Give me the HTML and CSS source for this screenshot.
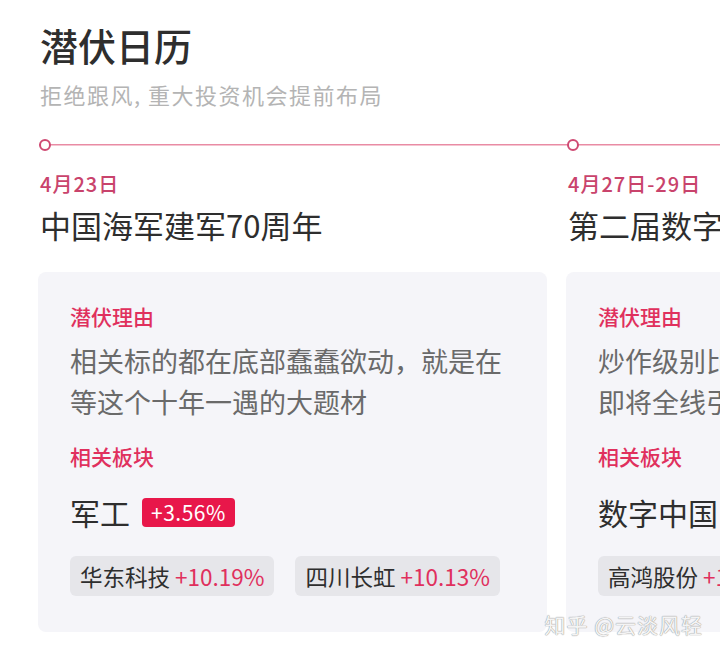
FILE: index.html
```html
<!DOCTYPE html>
<html lang="zh">
<head>
    <meta charset="UTF-8">
    <meta name="viewport" content="width=device-width, initial-scale=1.0">
    <title>潜伏日历</title>
    <link rel="stylesheet" href="styles.css">
</head>
<body>
    <header class="page-head">
        <h1 class="title">潜伏日历</h1>
        <p class="subtitle">拒绝跟风, 重大投资机会提前布局</p>
    </header>
    <main class="timeline">
        <section class="event">
            <div class="mark"><span class="dot"></span></div>
            <div class="date">4月23日</div>
            <h2 class="event-name">中国海军建军70周年</h2>
            <div class="card">
                <h3 class="label">潜伏理由</h3>
                <p class="reason">相关标的都在底部蠢蠢欲动，就是在等这个十年一遇的大题材</p>
                <h3 class="label label-sector">相关板块</h3>
                <div class="sector">
                    <span class="sector-name">军工</span>
                    <span class="badge">+3.56%</span>
                </div>
                <div class="stocks">
                    <span class="chip">华东科技 <em>+10.19%</em></span>
                    <span class="chip">四川长虹 <em>+10.13%</em></span>
                </div>
            </div>
        </section>
        <section class="event">
            <div class="mark"><span class="dot"></span></div>
            <div class="date">4月27日-29日</div>
            <h2 class="event-name">第二届数字中国建设峰会</h2>
            <div class="card">
                <h3 class="label">潜伏理由</h3>
                <p class="reason">炒作级别比肩雄安新区，相关题材股即将全线引爆</p>
                <h3 class="label label-sector">相关板块</h3>
                <div class="sector">
                    <span class="sector-name">数字中国</span>
                    <span class="badge">+4.12%</span>
                </div>
                <div class="stocks">
                    <span class="chip">高鸿股份 <em>+10.02%</em></span>
                    <span class="chip">浪潮软件 <em>+9.98%</em></span>
                </div>
            </div>
        </section>
    </main>
    <div class="watermark">知乎 @云淡风轻</div>
</body>
</html>
```

FILE: styles.css
```css
/* 基础样式 */
body {
    margin: 0;
    padding: 20px 0 0 40px;
    background-color: #fff;
    font-family: "Noto Sans CJK SC", "Noto Sans", sans-serif;
    color: #333;
    width: 680px;
    height: 633px;
    overflow: hidden;
    position: relative;
}

.title {
    margin: 0;
    font-size: 38px;
    line-height: 50px;
    font-weight: 500;
    color: #2e2e2e;
}

.subtitle {
    margin: 9px 0 0;
    font-size: 22px;
    line-height: 30px;
    letter-spacing: 1.5px;
    color: #b4b4b4;
}

.timeline {
    display: flex;
    gap: 21px;
    margin-top: 30px;
    width: 1200px;
}

.event {
    width: 507px;
    flex: none;
}

/* 时间轴 */
.mark {
    height: 12px;
    display: flex;
    align-items: center;
    margin-left: -1px;
    margin-right: -21px;
    background: linear-gradient(#e98ba4, #e98ba4) no-repeat 0 50% / 100% 1.5px;
}

.dot {
    width: 8px;
    height: 8px;
    border: 2px solid #cf4a73;
    border-radius: 50%;
    background: #fff;
}

.date {
    margin-top: 21px;
    font-size: 20px;
    line-height: 24px;
    letter-spacing: 1px;
    color: #c9436c;
    font-weight: 500;
}

.event-name {
    margin: 11px 0 0;
    font-size: 31px;
    line-height: 36px;
    font-weight: 400;
    color: #2e2e2e;
    white-space: nowrap;
}

.card {
    margin: 29px 0 0 -2px;
    padding: 30px 32px 36px;
    background-color: #f5f5f9;
    border-radius: 8px;
}

.label {
    margin: 0;
    font-size: 21px;
    line-height: 28px;
    font-weight: 500;
    color: #e0305d;
}

.reason {
    margin: 10px 0 0;
    font-size: 27px;
    line-height: 41px;
    color: #6a6a6a;
}

.label-sector {
    margin-top: 20px;
}

.sector {
    margin-top: 27px;
    display: flex;
    align-items: center;
    gap: 12px;
    height: 30px;
}

.sector-name {
    font-size: 30px;
    line-height: 30px;
    color: #2e2e2e;
}

.badge {
    background-color: #e8174a;
    color: #fff;
    font-size: 21px;
    line-height: 29px;
    padding: 0 9px;
    letter-spacing: 0.5px;
    border-radius: 4px;
}

.stocks {
    margin-top: 29px;
    display: flex;
    gap: 21px;
}

.chip {
    background-color: #e6e6ea;
    border-radius: 6px;
    height: 40px;
    line-height: 40px;
    padding: 0 10px;
    font-size: 22.5px;
    color: #2e2e2e;
    white-space: nowrap;
}

.chip em {
    font-style: normal;
    color: #e0305d;
}

/* 水印 */
.watermark {
    position: absolute;
    right: 17px;
    bottom: 15px;
    font-size: 21px;
    line-height: 28px;
    color: #f4f4f4;
    text-shadow: 0 0 1px #999, 0 0 1px #999;
    letter-spacing: 1px;
}
```
